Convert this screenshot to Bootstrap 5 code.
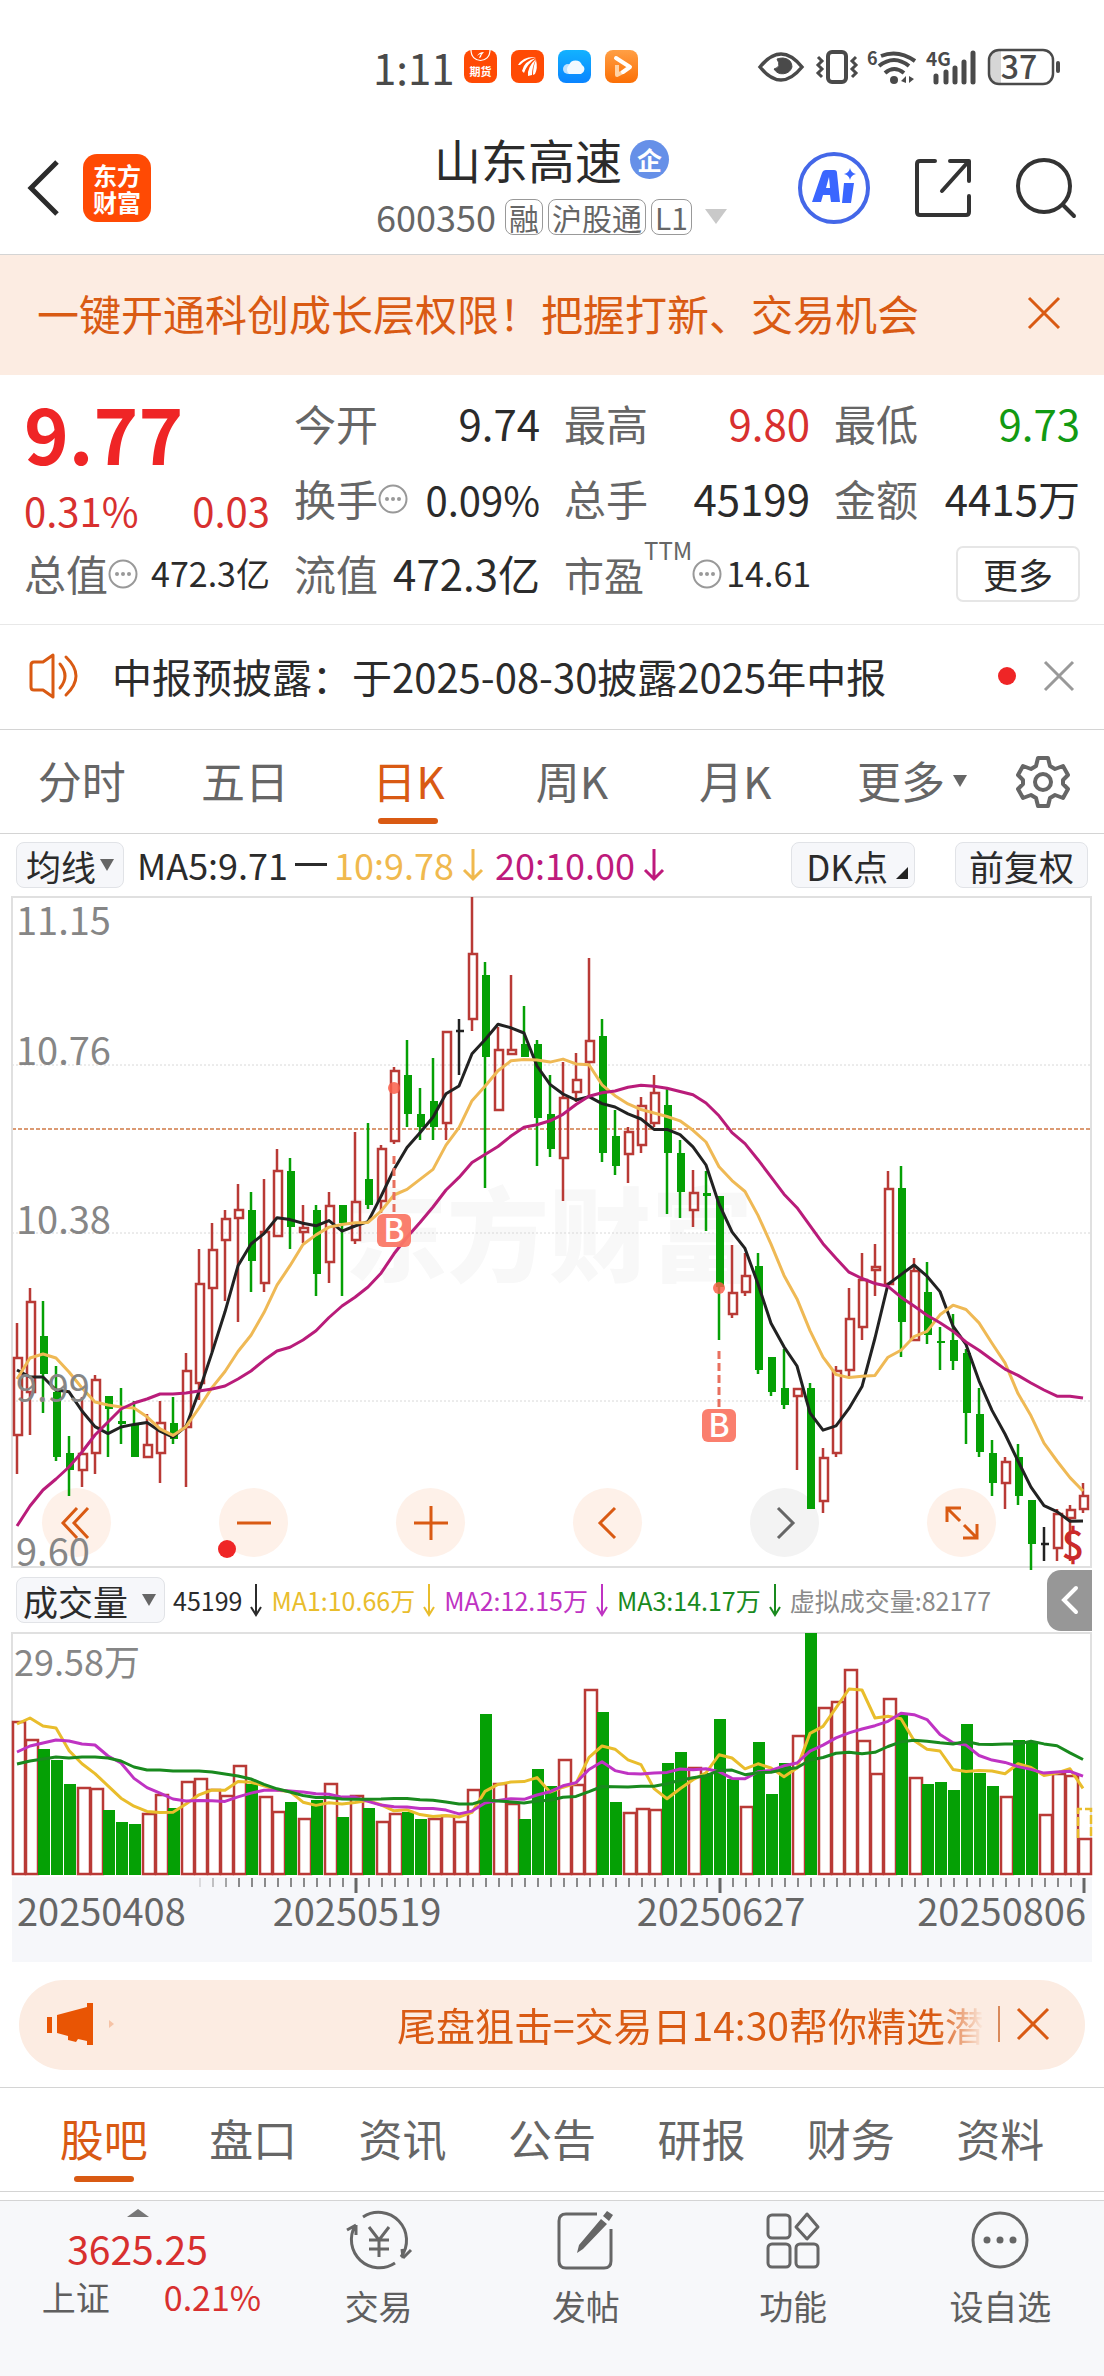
<!DOCTYPE html>
<html lang="zh-CN">
<head>
<meta charset="utf-8">
<meta name="viewport" content="width=device-width, initial-scale=1">
<title>山东高速 600350</title>
<link href="https://cdn.jsdelivr.net/npm/bootstrap@5.3.0/dist/css/bootstrap.min.css" rel="stylesheet">
<style>
:root{--brand:#d95a13;--brand-soft:#fcece2;--up:#d8302f;--down:#129a12;--ink:#2b2b2b;--muted:#666}
body{font-family:"Noto Sans CJK SC","Noto Sans",sans-serif;color:var(--ink);background:#fff;line-height:1.2}
a{color:inherit;text-decoration:none}
button{border:0;background:none;padding:0;color:inherit;line-height:1}
svg{display:block;flex:none;overflow:visible}
.fs-s{font-size:34px}.fs-m{font-size:36px}.fs-l{font-size:39px}.fs-xl{font-size:42px}
.up{color:var(--up)}.down{color:var(--down)}.soft{color:var(--muted)}
.statusbar{height:134px;padding:0 44px 0 373px;color:#4a4a4a}
.app-header{display:grid;grid-template-columns:1fr auto 1fr;height:121px;padding:0 28px 12px 27px;border-bottom:1px solid #d4d4d4}
.logo-tile{width:68px;height:68px;border-radius:14px;background:#ff4a04;color:#fff;font-size:24px;line-height:27px;font-weight:700}
.stock-name{font-size:47px;line-height:50px;margin:0;font-weight:400}
.codes{gap:5px;height:50px;margin-top:8px}
.corp{width:39px;height:39px;border-radius:50%;background:#6690e8;color:#fff;font-size:25px;font-weight:700}
.tagbox{border:1px solid #999;border-radius:8px;font-size:30px;line-height:34px;padding:0 3px}
.promo{height:120px;padding:0 44px 4px 37px;background:var(--brand-soft);color:var(--brand)}
.quote{display:grid;grid-template-columns:repeat(4,minmax(0,1fr));grid-template-rows:repeat(3,75px);column-gap:24px;padding:11px 24px 13px;border-bottom:1px solid #e8e8e8}
.quote>div{white-space:nowrap}
.quote .last{grid-row:span 2}
.last strong{font-size:76px;line-height:92px;padding-bottom:8px;color:#ef2526}
.more-btn{width:124px;height:56px;border:2px solid #e6e6e6;border-radius:7px;font-size:35px}
.news{height:105px;padding:0 30px 3px 28px;border-bottom:1px solid #d4d4d4;font-size:40px}
.dot{width:18px;height:18px;border-radius:50%;background:#ef2526}
.tabs{color:var(--muted);font-size:44px}
.tabs a{position:relative;display:flex;align-items:center;justify-content:center;flex:1;height:100%;padding-bottom:2px}
.tabs a.active{color:var(--brand)}
.tabs a.active::after{content:"";position:absolute;bottom:9px;width:60px;height:6px;border-radius:3px;background:var(--brand)}
.period{height:104px;border-bottom:1px solid #d4d4d4}
.period .five{flex:0 0 74%}
.pick{height:46px;border:1px solid #e1e3e7;border-radius:8px;background:#f6f7fa;font-size:35px;padding:0 9px}
.ma-row{height:62px;padding:0 16px}
.tri{width:0;height:0;border:7px solid transparent;border-top:12px solid #666;border-bottom:0}
.corner{width:0;height:0;border-left:12px solid transparent;border-bottom:12px solid #222}
.chart-box svg{position:relative;z-index:1;pointer-events:none}
.tools{position:absolute;left:42px;right:108px;bottom:11px}
.tool{width:69px;height:69px;border-radius:50%;background:#fef1e9;color:var(--brand)}
.tool.off{background:#f3f3f3;color:#666}
.tool-dot{position:absolute;left:-1px;bottom:-1px}
.vol-row{height:64px;padding-left:16px}
.vol-info{font-size:25px;white-space:nowrap;gap:8px}
.side{width:45px;height:61px;margin-right:12px;border-radius:14px 0 0 14px;background:#979797;color:#fff}
.pill{height:90px;margin:18px 19px 17px;padding:0 36px 2px 28px;border-radius:45px;background:var(--brand-soft);color:var(--brand)}
.marquee-text{-webkit-mask-image:linear-gradient(90deg,#000 92%,transparent);mask-image:linear-gradient(90deg,#000 92%,transparent);white-space:nowrap}
.sections{height:105px;padding:0 29px;border-top:1px solid #d4d4d4;border-bottom:1px solid #d4d4d4}
.dock{height:176px;margin-top:8px;border-top:1px solid #d4d4d4;background:#f7f8fa;color:#5f5f5f}
.dock a{flex:1;padding-top:9px;font-size:34px}
.dock .index{flex:0 0 275px;padding-top:8px}
.index-pct{gap:54px;padding-left:28px;margin-top:5px}
</style>
<script src="https://cdn.jsdelivr.net/npm/bootstrap@5.3.0/dist/js/bootstrap.bundle.min.js"></script>
</head>
<body>
<div class="statusbar d-flex align-items-center justify-content-between">
  <div class="d-flex align-items-center">
    <span style="font-size:42px;width:91px">1:11</span>
    <div class="d-flex" style="gap:14px">
      <svg width="33" height="33" viewBox="0 0 33 33"><rect width="33" height="33" rx="8" fill="#ff4a04"/><path d="M7 0c0 14 19 14 19 0" fill="none" stroke="#fff" stroke-width="1.2"/><path d="M13 6q2-4 7-4-3 3-3 5-1 1-2 1 1-3 2-4-2 0-4 2z" fill="#fff"/><text x="16.500" y="26" font-size="11" font-weight="700" fill="#fff" text-anchor="middle">期货</text></svg>
      <svg width="33" height="33" viewBox="0 0 33 33"><rect width="33" height="33" rx="8" fill="#ff4a04"/><path d="M7 15q5-9 18-8-9 1-16 8zM11 21q2-10 14-13-9 6-12 15zM17 26q-1-9 8-17-4 8-4 16zM22 25q0-9 3-15 2 8-1 14z" fill="#fff"/></svg>
      <svg width="33" height="33" viewBox="0 0 33 33"><defs><linearGradient id="gb" x2="0" y2="1"><stop stop-color="#12b2ff"/><stop offset="1" stop-color="#0a84ff"/></linearGradient><linearGradient id="go" x2="0" y2="1"><stop stop-color="#ff9f45"/><stop offset="1" stop-color="#fb6f05"/></linearGradient></defs><rect width="33" height="33" rx="8" fill="url(#gb)"/><circle cx="10" cy="19" r="5" fill="#bfe2ff"/><path d="M11 24a6 6 0 0 1 0-9 7 7 0 0 1 13 0 5 5 0 0 1-1 9z" fill="#f2f9ff"/></svg>
      <svg width="33" height="33" viewBox="0 0 33 33"><rect width="33" height="33" rx="8" fill="url(#go)"/><path d="M12 15v10l6-3" fill="none" stroke="#ffd2a6" stroke-width="4" stroke-linejoin="round"/><path d="M11 8l14 9-7 5" fill="none" stroke="#fff" stroke-width="4" stroke-linecap="round" stroke-linejoin="round"/></svg>
    </div>
  </div>
  <svg width="304" height="40" viewBox="755 47 304 40" fill="none" stroke="#4a4a4a" role="img" aria-label="状态">
    <path d="M759 67q21-26 42 0-21 26-42 0z" stroke-width="3.500"/><path d="M776 59q5 8-3 10a10 10 0 0 0 18-2q0-8-9-9-3 0-6 1z" fill="#4a4a4a"/>
    <rect x="827" y="52" width="18" height="30" rx="4" stroke-width="4"/>
    <path d="M817 57l4 4-4 4 4 4-4 4 4 4M855 57l-4 4 4 4-4 4 4 4-4 4" stroke-width="3"/>
    <path d="M880 56q17-7 34 5M878 66q15-12 30 0M884 73q9-8 19 0" stroke-width="4"/><circle cx="893" cy="80" r="4" fill="#4a4a4a" stroke="none"/><path d="M900 81l5-5v7zM908 76v7l5-4z" fill="#4a4a4a" stroke="none"/>
    <g fill="#4a4a4a" stroke="none" font-weight="700"><text x="866" y="65" font-size="18">6</text><text x="925" y="66" font-size="19">4G</text><text x="1018" y="79" font-size="32" font-weight="500" text-anchor="middle">37</text></g>
    <path d="M935 76v6M945 72v10M954 68v14M963 62v20M972 53v29" stroke-width="5" stroke-linecap="round"/>
    <path d="M996 50h4v34h-4q-7 0-7-8v-18q0-8 7-8z" fill="#000" fill-opacity=".16" stroke="none"/><rect x="988" y="50" width="64" height="34" rx="10" stroke-width="2.500"/><path d="M1057 63v8" stroke-width="4" stroke-linecap="round"/>
  </svg>
</div>

<header class="app-header align-items-center">
  <div class="d-flex align-items-center" style="gap:24px">
    <button aria-label="返回"><svg width="32" height="56" viewBox="0 0 32 56" fill="none" stroke="#2b2b2b" stroke-width="5"><path d="M30 2L4 28l26 26"/></svg></button>
    <a href="#" class="logo-tile d-flex align-items-center text-center px-2">东方财富</a>
  </div>
  <div>
    <div class="d-flex align-items-center justify-content-center gap-2"><h1 class="stock-name">山东高速</h1><span class="corp d-flex align-items-center justify-content-center">企</span></div>
    <div class="codes d-flex align-items-center soft"><span class="fs-m me-1">600350</span><span class="tagbox">融</span><span class="tagbox">沪股通</span><span class="tagbox">L1</span>
      <svg class="ms-2" width="22" height="16" viewBox="0 0 22 16"><path d="M0 0h22L11 15z" fill="#c9c9c9"/></svg></div>
  </div>
  <div class="d-flex align-items-center justify-content-end" style="gap:44px">
    <button aria-label="AI"><svg width="72" height="72" viewBox="0 0 72 72"><circle cx="36" cy="36" r="34" fill="#fff" stroke="#4467e8" stroke-width="4"/><path fill="#3a66ff" fill-rule="evenodd" d="M14 50l10-29q1-3 4-3h8q3 0 3 3l3 29h-9l-1-7h-7l-2 7zM28 36h4l-1-11zM46 31h10l-3 20h-9zM52 16q1 5 6 6-5 1-6 6-1-5-6-6 5-1 6-6z"/></svg></button>
    <button aria-label="分享"><svg width="58" height="60" viewBox="0 0 58 60" fill="none" stroke="#333" stroke-width="4" stroke-linecap="round" stroke-linejoin="round"><path d="M21 3H6q-3 0-3 3v48q0 3 3 3h46q3 0 3-3V38M36 3h19v20M54 4L28 33"/></svg></button>
    <button aria-label="搜索"><svg width="60" height="60" viewBox="0 0 60 60" fill="none" stroke="#333" stroke-width="4" stroke-linecap="round"><circle cx="28" cy="28" r="26"/><path d="M47 47l11 11"/></svg></button>
  </div>
</header>

<div class="promo d-flex align-items-center justify-content-between fs-xl">
  <a href="#">一键开通科创成长层权限！把握打新、交易机会</a>
  <button aria-label="关闭"><svg width="32" height="32" viewBox="0 0 32 32" stroke="currentColor" stroke-width="3"><path d="M1 1l30 30M31 1L1 31"/></svg></button>
</div>

<section class="quote fs-xl">
  <div class="last"><strong class="d-block">9.77</strong><div class="d-flex justify-content-between up" style="font-size:40px"><span>0.31%</span><span>0.03</span></div></div>
  <div class="d-flex align-items-center justify-content-between"><span class="soft">今开</span><span>9.74</span></div>
  <div class="d-flex align-items-center justify-content-between"><span class="soft">最高</span><span class="up">9.80</span></div>
  <div class="d-flex align-items-center justify-content-between"><span class="soft">最低</span><span class="down">9.73</span></div>
  <div class="d-flex align-items-center"><span class="soft">换手</span><svg width="30" height="30" viewBox="0 0 30 30" fill="#999"><circle cx="15" cy="15" r="13.500" fill="none" stroke="#999" stroke-width="2"/><circle cx="9" cy="15" r="2"/><circle cx="15" cy="15" r="2"/><circle cx="21" cy="15" r="2"/></svg><span class="ms-auto" style="font-size:40px">0.09%</span></div>
  <div class="d-flex align-items-center justify-content-between"><span class="soft">总手</span><span>45199</span></div>
  <div class="d-flex align-items-center justify-content-between"><span class="soft">金额</span><span>4415万</span></div>
  <div class="d-flex align-items-center"><span class="soft">总值</span><svg width="30" height="30" viewBox="0 0 30 30" fill="#999"><circle cx="15" cy="15" r="13.500" fill="none" stroke="#999" stroke-width="2"/><circle cx="9" cy="15" r="2"/><circle cx="15" cy="15" r="2"/><circle cx="21" cy="15" r="2"/></svg><span class="fs-s ms-auto">472.3亿</span></div>
  <div class="d-flex align-items-center justify-content-between"><span class="soft">流值</span><span>472.3亿</span></div>
  <div class="d-flex align-items-center"><span class="soft" style="font-size:40px">市盈</span><span class="soft align-self-start" style="font-size:24px">TTM</span><svg width="30" height="30" viewBox="0 0 30 30" fill="#999"><circle cx="15" cy="15" r="13.500" fill="none" stroke="#999" stroke-width="2"/><circle cx="9" cy="15" r="2"/><circle cx="15" cy="15" r="2"/><circle cx="21" cy="15" r="2"/></svg><span class="fs-s ms-1">14.61</span></div>
  <div class="d-flex align-items-center justify-content-end"><button class="more-btn">更多</button></div>
</section>

<div class="news d-flex align-items-center">
  <svg width="54" height="44" viewBox="0 0 54 44" fill="none" stroke="#d95a13" stroke-width="3" stroke-linejoin="round"><path d="M3 11q0-3 3-3h9l10-7v42l-10-7H6q-3 0-3-3z"/><path d="M32 10q10 12 0 24M38 3q20 19 0 38" stroke-linecap="round"/></svg>
  <a href="#" class="flex-grow-1" style="padding-left:30px">中报预披露：于2025-08-30披露2025年中报</a>
  <span class="dot"></span>
  <button class="ms-4 ps-1" aria-label="关闭"><svg width="30" height="30" viewBox="0 0 30 30" stroke="#999" stroke-width="3"><path d="M1 1l28 28M29 1L1 29"/></svg></button>
</div>

<nav class="period tabs d-flex align-items-center">
  <div class="five d-flex h-100"><a href="#">分时</a><a href="#">五日</a><a href="#" class="active">日K</a><a href="#">周K</a><a href="#">月K</a></div>
  <a href="#" class="justify-content-end gap-2">更多<span class="tri"></span></a>
  <button class="text-end" style="padding:0 35px 0 50px" aria-label="设置"><svg width="52" height="52" viewBox="0 0 52 52" fill="none" stroke="#666" stroke-width="4" stroke-linejoin="round"><path d="M21 2h10l2 8 5 3 8-3 5 9-5 5v4l5 5-5 9-8-3-5 3-2 8H21l-2-8-5-3-8 3-5-9 5-5v-4l-5-5 5-9 8 3 5-3z"/><circle cx="26" cy="26" r="8"/></svg></button>
</nav>

<div class="ma-row d-flex align-items-center fs-m">
  <button class="pick d-flex align-items-center gap-1">均线<span class="tri"></span></button>
  <span class="d-flex align-items-center" style="margin-left:13px;gap:7px">MA5:9.71<svg width="32" height="4"><rect width="32" height="3" fill="#2b2b2b"/></svg></span>
  <span class="d-flex align-items-center gap-2" style="color:#f0b94e;margin-left:7px">10:9.78<svg width="22" height="32" viewBox="0 0 22 32" fill="none" stroke="currentColor" stroke-width="3"><path d="M11 0v30M2 21l9 9 9-9"/></svg></span>
  <span class="d-flex align-items-center gap-2" style="color:#be1a7c;margin-left:11px">20:10.00<svg width="22" height="32" viewBox="0 0 22 32" fill="none" stroke="currentColor" stroke-width="3"><path d="M11 0v30M2 21l9 9 9-9"/></svg></span>
  <button class="pick ms-auto d-flex align-items-center gap-2" style="padding:0 6px 0 14px">DK点<span class="corner align-self-end mb-2"></span></button>
  <button class="pick" style="padding:0 13px;margin-left:40px">前复权</button>
</div>

<div class="chart-box position-relative">
  <svg id="kline" class="w-100" viewBox="0 896 1104 672" role="img" aria-label="日K线图"></svg>
  <div class="tools d-flex justify-content-between">
    <button class="tool d-flex align-items-center justify-content-center" aria-label="最左"><svg width="30" height="32" viewBox="0 0 30 32" fill="none" stroke="currentColor" stroke-width="3"><path d="M15 1L1 16l14 15M26 1L12 16l14 15"/></svg></button>
    <button class="tool position-relative d-flex align-items-center justify-content-center" aria-label="缩小"><svg width="34" height="34" stroke="currentColor" stroke-width="3"><path d="M0 17h34"/></svg><span class="dot tool-dot"></span></button>
    <button class="tool d-flex align-items-center justify-content-center" aria-label="放大"><svg width="34" height="34" stroke="currentColor" stroke-width="3"><path d="M0 17h34M17 0v34"/></svg></button>
    <button class="tool d-flex align-items-center justify-content-center" aria-label="左移"><svg width="20" height="32" viewBox="0 0 20 32" fill="none" stroke="currentColor" stroke-width="3"><path d="M17 1L2 16l15 15"/></svg></button>
    <button class="tool off d-flex align-items-center justify-content-center" aria-label="右移"><svg width="20" height="32" viewBox="0 0 20 32" fill="none" stroke="currentColor" stroke-width="3"><path d="M3 1l15 15L3 31"/></svg></button>
    <button class="tool d-flex align-items-center justify-content-center" aria-label="全屏"><svg width="34" height="34" viewBox="0 0 34 34" fill="none" stroke="currentColor" stroke-width="3"><path d="M16 2H2v14M2 2l13 13M18 32h14V18M32 32L19 19"/></svg></button>
  </div>
</div>

<div class="vol-row d-flex align-items-center">
  <button class="pick d-flex align-items-center" style="gap:14px;padding:0 8px 0 6px">成交量<span class="tri"></span></button>
  <div class="vol-info d-flex align-items-center ms-2">
    <span class="d-flex align-items-center gap-2">45199<svg width="13" height="32" viewBox="0 0 13 32" fill="none" stroke="currentColor" stroke-width="2"><path d="M6 0v31M1 23l5 8 5-8"/></svg></span>
    <span class="d-flex align-items-center gap-2" style="color:#e9bd2c">MA1:10.66万<svg width="13" height="32" viewBox="0 0 13 32" fill="none" stroke="currentColor" stroke-width="2"><path d="M6 0v31M1 23l5 8 5-8"/></svg></span>
    <span class="d-flex align-items-center gap-2" style="color:#bf33c3">MA2:12.15万<svg width="13" height="32" viewBox="0 0 13 32" fill="none" stroke="currentColor" stroke-width="2"><path d="M6 0v31M1 23l5 8 5-8"/></svg></span>
    <span class="d-flex align-items-center gap-2" style="color:#198a1e">MA3:14.17万<svg width="13" height="32" viewBox="0 0 13 32" fill="none" stroke="currentColor" stroke-width="2"><path d="M6 0v31M1 23l5 8 5-8"/></svg></span>
    <span style="color:#8a8a8a">虚拟成交量:82177</span>
  </div>
  <button class="side ms-auto d-flex align-items-center justify-content-center" aria-label="展开"><svg width="18" height="28" viewBox="0 0 18 28" fill="none" stroke="#fff" stroke-width="4" stroke-linecap="round"><path d="M15 2L3 14l12 12"/></svg></button>
</div>
<svg id="volume" class="w-100" viewBox="0 1632 1104 330" role="img" aria-label="成交量图"></svg>

<div class="pill d-flex align-items-center fs-l">
  <svg width="72" height="42" viewBox="0 0 72 42" fill="#e95504"><path d="M0 14h5v16H0zM10 12l30-8V0h6v42h-6v-4l-9-2-2 3-8-2v-4l-11-3z"/><path d="M62 17l5 4-5 4z" fill="#f6c3a6"/></svg>
  <div class="marquee-text ms-auto"><a href="#">尾盘狙击=交易日14:30帮你精选潜</a></div>
  <svg width="2" height="36" style="margin:0 17px 0 14px"><rect width="2" height="36" fill="#d98a5c"/></svg>
  <button aria-label="关闭"><svg width="32" height="32" viewBox="0 0 32 32" stroke="currentColor" stroke-width="3"><path d="M1 1l30 30M31 1L1 31"/></svg></button>
</div>

<nav class="sections tabs d-flex">
  <a href="#" class="active">股吧</a><a href="#">盘口</a><a href="#">资讯</a><a href="#">公告</a><a href="#">研报</a><a href="#">财务</a><a href="#">资料</a>
</nav>

<nav class="dock d-flex">
  <a href="#" class="index d-flex flex-column align-items-center"><svg width="22" height="8"><path d="M0 8L11 0l11 8z" fill="#777"/></svg><span class="up" style="font-size:39px;margin-top:8px">3625.25</span><span class="index-pct d-flex">上证<span class="up">0.21%</span></span></a>
  <a href="#" class="d-flex flex-column align-items-center gap-3"><svg width="66" height="60" viewBox="0 0 66 60" fill="none" stroke="#666" stroke-width="3"><path d="M17 7a28 28 0 0 1 38 40M49 53A28 28 0 0 1 9 16M1 20l9-5M10 15v10M65 40l-8 8M57 48l-1-9"/><path d="M23 17l10 13 10-13M23 30h20M23 39h20M33 30v17"/></svg>交易</a>
  <a href="#" class="d-flex flex-column align-items-center gap-3"><svg width="58" height="60" viewBox="0 0 58 60" fill="none" stroke="#666" stroke-width="3"><path d="M40 4H9q-7 0-7 7v40q0 7 7 7h38q7 0 7-7V19"/><path d="M50 1l6 4-4 6-6-5zM44 9l6 5-24 25-6 4 2-8z" fill="#666" stroke="none"/></svg>发帖</a>
  <a href="#" class="d-flex flex-column align-items-center gap-3"><svg width="54" height="60" viewBox="0 0 54 60" fill="none" stroke="#666" stroke-width="3" stroke-linejoin="round"><rect x="2" y="5" width="22" height="23" rx="4"/><rect x="2" y="34" width="22" height="23" rx="4"/><rect x="30" y="34" width="22" height="23" rx="4"/><path d="M41 4l11 13-11 12-11-12z"/></svg>功能</a>
  <a href="#" class="d-flex flex-column align-items-center gap-3"><svg width="58" height="60" viewBox="0 0 58 60" fill="#666"><circle cx="29" cy="30" r="27" fill="none" stroke="#666" stroke-width="3"/><circle cx="16" cy="30" r="3.500"/><circle cx="29" cy="30" r="3.500"/><circle cx="42" cy="30" r="3.500"/></svg>设自选</a>
</nav>

<script>
// One row per trading day: high, body top, body bottom, low (chart units), r = up, g = down, k = flat
const days = `1323 1357 1435 1474 r|1288 1301 1392 1435 r|1301 1336 1374 1413 g|1366 1392 1457 1461 g|1436 1453 1470 1496 g|1397 1453 1470 1487 r|1375 1379 1453 1474 r|1396 1396 1409 1457 g|1388 1421 1424 1444 g|1401 1424 1457 1457 g|1414 1444 1457 1457 r|1401 1422 1453 1483 r|1397 1423 1439 1444 g|1353 1370 1427 1487 r|1249 1283 1383 1400 r|1223 1249 1288 1352 r|1210 1218 1240 1301 r|1184 1209 1218 1322 r|1192 1210 1261 1292 g|1179 1231 1283 1292 r|1149 1170 1236 1236 r|1158 1171 1227 1249 g|1205 1227 1232 1243 r|1205 1210 1274 1296 g|1192 1205 1262 1283 r|1205 1205 1223 1296 g|1132 1201 1240 1244 r|1123 1179 1205 1209 g|1145 1148 1201 1213 r|1067 1070 1141 1144 r|1040 1075 1114 1127 g|1088 1114 1127 1140 g|1058 1101 1127 1140 g|1031 1031 1123 1140 r|1019 1031 1031 1075 k|897 953 1019 1031 r|962 975 1057 1188 g|1027 1049 1110 1110 r|975 1049 1054 1054 r|1006 1044 1057 1057 g|1040 1044 1118 1166 g|1075 1114 1149 1157 g|1062 1097 1158 1201 r|1053 1079 1092 1102 r|958 1040 1062 1097 r|1019 1036 1153 1162 g|1110 1136 1166 1175 g|1127 1131 1154 1183 r|1097 1105 1145 1153 r|1075 1092 1123 1127 r|1088 1105 1153 1214 g|1140 1153 1192 1218 g|1170 1192 1210 1227 r|1171 1193 1196 1231 g|1196 1196 1287 1340 g|1245 1292 1314 1318 r|1253 1275 1292 1296 r|1253 1266 1370 1374 g|1357 1357 1392 1396 g|1349 1388 1405 1409 g|1388 1388 1396 1470 r|1383 1388 1509 1509 g|1448 1457 1501 1513 r|1366 1370 1453 1457 r|1288 1318 1370 1376 r|1253 1279 1327 1340 r|1244 1266 1270 1296 r|1171 1188 1284 1284 r|1166 1188 1322 1357 g|1258 1270 1340 1340 r|1262 1292 1335 1344 g|1327 1341 1343 1370 g|1314 1340 1361 1370 g|1349 1353 1413 1444 g|1388 1414 1452 1457 g|1440 1453 1483 1496 g|1457 1461 1483 1509 r|1444 1457 1496 1505 g|1500 1500 1544 1570 g|1527 1544 1544 1561 k|1509 1513 1548 1561 r|1505 1509 1518 1561 r|1483 1495 1509 1513 r`
  .split('|').map(s => { const p = s.split(' '); return [+p[0], +p[1], +p[2], +p[3], p[4]]; });
// Volume bar tops with direction
const vols = 'r1721 r1739 g1749 g1760 g1784 r1787 r1788 g1810 g1822 g1824 r1813 r1794 g1808 r1781 r1778 r1789 r1795 r1765 g1784 r1796 r1811 g1802 r1818 g1800 r1783 g1817 r1795 g1808 r1821 r1813 g1812 g1819 r1818 r1815 r1821 r1789 g1714 r1783 r1803 g1819 g1769 g1786 r1759 r1784 r1689 g1712 g1802 r1812 r1808 r1809 g1763 g1752 r1767 g1773 g1719 g1779 r1806 g1742 g1794 g1763 r1735 g1633 r1707 r1701 r1669 r1740 r1773 r1698 g1714 r1777 g1784 g1782 g1790 g1724 g1773 g1786 r1796 g1740 g1742 r1814 r1773 r1775 r1838'
  .split(' ').map(s => [s[0], +s.slice(1)]);
const RED = '#b93a36', GREEN = '#05a005', BLACK = '#222';
const X = i => 17 + 13 * i;
// Moving average; `seed` holds the values that need days before the first one shown
const avg = (v, n, seed) => v.map((_, i) => i < seed.length ? seed[i] : v.slice(i - n + 1, i + 1).reduce((a, b) => a + b) / n);
const line = (v, c) => `<polyline fill="none" stroke="${c}" stroke-width="3" stroke-linejoin="round" points="${v.map((y, i) => X(i) + ',' + y.toFixed(1)).join(' ')}"/>`;

let k = `<text x="345" y="1274" font-size="102" font-weight="900" fill="#f8f8f8">东方财富</text>
<path d="M12 1065H1091M12 1233H1091M12 1401H1091" stroke="#d8d8d8" stroke-dasharray="2 2"/>
<path d="M12 1129H1091" stroke="#cf7a45" stroke-width="1.500" stroke-dasharray="4 2"/>
<path d="M12 897H1091V1567H12z" fill="none" stroke="#e0e0e0" stroke-width="2"/>`;
days.forEach(([h, t, b, l, c], i) => {
  const x = X(i);
  if (c === 'k') k += `<path d="M${x} ${h}V${l}M${x - 3} ${t}h8" stroke="${BLACK}" stroke-width="2.500"/>`;
  else if (c === 'g') k += `<path d="M${x} ${h}V${l}" stroke="${GREEN}" stroke-width="2.500"/><rect x="${x - 3}" y="${t}" width="8" height="${b - t}" fill="${GREEN}"/>`;
  else k += `<path d="M${x} ${h}V${t}M${x} ${b}V${l}" stroke="${RED}" stroke-width="2.500"/><rect x="${x - 3}" y="${t + 1}" width="8" height="${Math.max(b - t - 1, 3)}" fill="none" stroke="${RED}" stroke-width="2.500"/>`;
});
const close = days.map(d => d[4] === 'g' ? d[2] : d[1]);
k += line(avg(close, 5, [1370, 1377, 1377, 1390]), BLACK)
  + line(avg(close, 10, [1379, 1358, 1354, 1358, 1372, 1388, 1402, 1405, 1407]), '#efb955')
  + line(avg(close, 20, [1526, 1506, 1490, 1479, 1467, 1452, 1435, 1422, 1409, 1403, 1399, 1394, 1394, 1393, 1391, 1389, 1386, 1379, 1371]), '#b91c7a');
[[394, 1088, 1156, 1214], [719, 1288, 1351, 1409]].forEach(([x, dot, from, box]) => {
  k += `<circle cx="${x}" cy="${dot}" r="6" fill="#fa5f4a" fill-opacity=".85"/><path d="M${x} ${from}V${box}" stroke="#e8705f" stroke-width="3" stroke-dasharray="8 4"/>
  <rect x="${x - 17}" y="${box}" width="34" height="33" rx="6" fill="#fa7866" fill-opacity=".95"/><text x="${x}" y="${box + 28}" font-size="32" font-weight="500" fill="#fff" text-anchor="middle">B</text>`;
});
k += `<text x="1073" y="1559" font-size="40" font-weight="500" fill="#cb2a2a" text-anchor="middle">$</text>`;
[['11.15', 935], ['10.76', 1065], ['10.38', 1234], ['9.99', 1402], ['9.60', 1566]].forEach(([s, y]) => k += `<text x="16" y="${y}" font-size="38" fill="#868686">${s}</text>`);
document.getElementById('kline').innerHTML = k;

let v = `<rect x="12" y="1877" width="1080" height="85" fill="#f6f7fa"/><path d="M12 1875V1633H1091V1875" fill="none" stroke="#e0e0e0" stroke-width="2"/>`;
vols.forEach(([c, t], i) => {
  const x = X(i);
  v += c === 'g' ? `<rect x="${x - 5}" y="${t}" width="12" height="${1875 - t}" fill="${GREEN}"/>`
    : `<rect x="${x - 4}" y="${t + 1}" width="12" height="${1873 - t}" fill="#fff" stroke="${RED}" stroke-width="2.500"/>`;
});
v += `<path d="M1078 1838V1809H1091V1838" fill="none" stroke="#e9bd2c" stroke-width="2.500" stroke-dasharray="9 3"/>`;
const vt = vols.map(d => d[1]);
v += line(avg(vt, 5, [1724, 1718, 1726, 1728]), '#e9bd2c')
  + line(avg(vt, 10, [1752, 1746, 1743, 1740, 1741, 1744, 1745, 1756, 1763]), '#bf33c3')
  + line(avg(vt, 20, [1764, 1761, 1759, 1757, 1758, 1757, 1757, 1758, 1761, 1767, 1770, 1770, 1771, 1771, 1771, 1772, 1774, 1776, 1779]), '#198a1e');
for (let i = 14; i < 83; i++) {
  const major = i === 26 || i === 54 || i === 82;
  v += `<path d="M${X(i) + 1} 1878v${major ? 15 : 9}" stroke="#666" stroke-width="${major ? 3 : 1.5}" opacity="${Math.min(1, (i - 13) / 4)}"/>`;
}
v += `<text x="14" y="1676" font-size="36" fill="#868686">29.58万</text>`;
[['20250408', 17, 'start'], ['20250519', 357, 'middle'], ['20250627', 721, 'middle'], ['20250806', 1086, 'end']].forEach(([s, x, a]) => v += `<text x="${x}" y="1926" font-size="38" fill="#666" text-anchor="${a}">${s}</text>`);
document.getElementById('volume').innerHTML = v;
</script>
</body>
</html>
